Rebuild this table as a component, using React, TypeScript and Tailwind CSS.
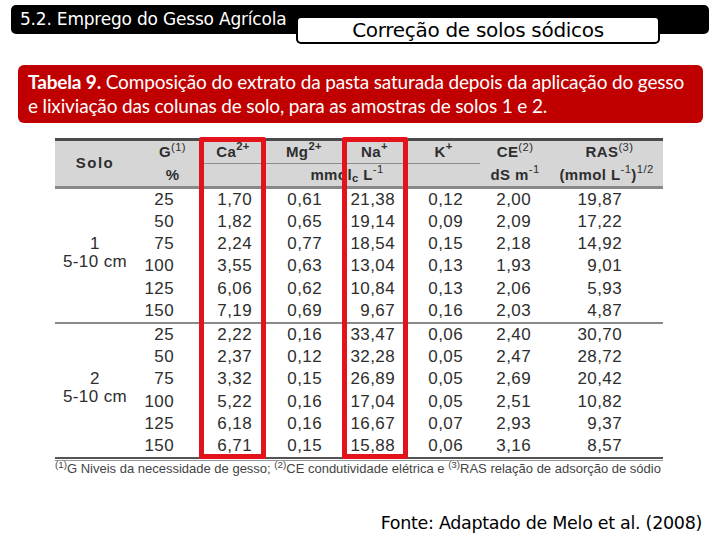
import React from "react";

const COLS = "grid grid-cols-[80px_65px_66px_76px_65px_73px_70px_113px]";
const PAD = ["pr-[26px]", "pr-[14px]", "pr-[20px]", "pr-[12px]", "pr-[17px]", "pr-[19px]", "pr-[41px]"];

const g1: string[][] = [
  ["25", "1,70", "0,61", "21,38", "0,12", "2,00", "19,87"],
  ["50", "1,82", "0,65", "19,14", "0,09", "2,09", "17,22"],
  ["75", "2,24", "0,77", "18,54", "0,15", "2,18", "14,92"],
  ["100", "3,55", "0,63", "13,04", "0,13", "1,93", "9,01"],
  ["125", "6,06", "0,62", "10,84", "0,13", "2,06", "5,93"],
  ["150", "7,19", "0,69", "9,67", "0,16", "2,03", "4,87"],
];
const g2: string[][] = [
  ["25", "2,22", "0,16", "33,47", "0,06", "2,40", "30,70"],
  ["50", "2,37", "0,12", "32,28", "0,05", "2,47", "28,72"],
  ["75", "3,32", "0,15", "26,89", "0,05", "2,69", "20,42"],
  ["100", "5,22", "0,16", "17,04", "0,05", "2,51", "10,82"],
  ["125", "6,18", "0,16", "16,67", "0,07", "2,93", "9,37"],
  ["150", "6,71", "0,15", "15,88", "0,06", "3,16", "8,57"],
];

function Group({ n, rows }: { n: string; rows: string[][] }) {
  return (
    <div className={`${COLS} grid-rows-[repeat(6,22.2px)]`}>
      <div className="row-span-6 col-start-1 row-start-1 flex flex-col items-center justify-center leading-[18px] pb-[6px]">
        <span>{n}</span>
        <span>5-10 cm</span>
      </div>
      {rows.map((r, i) =>
        r.map((v, j) => (
          <div
            key={`${i}-${j}`}
            className={`flex items-center justify-end pb-[1px] ${PAD[j]}`}
            style={{ gridRow: i + 1, gridColumn: j + 2 }}
          >
            {v}
          </div>
        ))
      )}
    </div>
  );
}

export default function App() {
  return (
    <div className="w-[720px] h-[540px] bg-white relative overflow-hidden flex flex-col">
      {/* Title bar */}
      <div className="mt-[5px] ml-[11px] w-[698px] h-[29px] bg-black rounded-[5px] relative flex items-center">
        <span className="pl-[9px] text-white text-[17px] font-['DejaVu_Sans',sans-serif] tracking-[-0.2px]">
          5.2. Emprego do Gesso Agrícola
        </span>
        <div className="absolute left-[285px] top-[11px] w-[364px] h-[28px] bg-white border-2 border-black rounded-[5px] flex items-center justify-center">
          <span className="text-black text-[20px] font-['DejaVu_Sans',sans-serif] tracking-[-0.3px]">
            Correção de solos sódicos
          </span>
        </div>
      </div>

      {/* Caption */}
      <div className="mt-[31px] ml-[18px] w-[685px] h-[58px] bg-[#c00000] rounded-[6px] px-[10px] pt-[5px] text-white text-[19px] leading-[24px] font-['Lato',sans-serif] tracking-[-0.15px]">
        <p>
          <b>Tabela 9.</b> Composição do extrato da pasta saturada depois da aplicação do gesso
        </p>
        <p>e lixiviação das colunas de solo, para as amostras de solos 1 e 2.</p>
      </div>

      {/* Table */}
      <div className="mt-[15px] ml-[55px] w-[608px] relative text-[#2e2e2e] text-[17px] font-['Liberation_Sans',Arial,sans-serif] tracking-[0.4px]">
        <div className="border-t-[3px] border-[#4a4a4a] bg-[#d6d6d6] border-b-[3px] border-b-[#888]">
          <div className={`${COLS} grid-rows-[23px_22px] font-bold text-[15px]`}>
            <div className="row-span-2 flex items-center justify-center tracking-[1.5px]">Solo</div>
            <div className="flex items-center justify-center pl-[10px]">
              G<sup className="font-normal">(1)</sup>
            </div>
            <div className="flex items-center justify-center border-b border-[#8c8c8c]">
              Ca<sup>2+</sup>
            </div>
            <div className="flex items-center justify-center border-b border-[#8c8c8c]">
              Mg<sup>2+</sup>
            </div>
            <div className="flex items-center justify-center border-b border-[#8c8c8c]">
              Na<sup>+</sup>
            </div>
            <div className="flex items-center justify-center border-b border-[#8c8c8c]">
              K<sup>+</sup>
            </div>
            <div className="flex items-center justify-center">
              CE<sup className="font-normal">(2)</sup>
            </div>
            <div className="flex items-center justify-center pl-[6px]">
              RAS<sup className="font-normal">(3)</sup>
            </div>
            <div className="flex items-center justify-center pl-[10px]">%</div>
            <div className="col-span-4 flex items-center justify-center pl-[14px]">
              mmol<sub>c</sub>&nbsp;L<sup className="font-normal">-1</sup>
            </div>
            <div className="flex items-center justify-center">
              dS&nbsp;m<sup className="font-normal">-1</sup>
            </div>
            <div className="flex items-center justify-center">
              (mmol&nbsp;L<sup className="font-normal">-1</sup>)<sup className="font-normal">1/2</sup>
            </div>
          </div>
        </div>
        <Group n="1" rows={g1} />
        <div className="h-[2px] bg-[#8a8a8a]" />
        <Group n="2" rows={g2} />
        <div className="h-[2px] bg-[#555]" />
        <div className="h-[1px] mt-[1px] bg-[#999]" />
        <p className="mt-[0px] leading-[15px] text-[13px] tracking-[0px] text-[#444] whitespace-nowrap">
          <sup>(1)</sup>G Niveis da necessidade de gesso; <sup>(2)</sup>CE condutividade elétrica e <sup>(3)</sup>RAS relação de adsorção de sódio
        </p>

        <div className="absolute left-[144px] top-[-1px] w-[67px] h-[322px] border-[5px] border-[#e3131b] rounded-[2px]" />
        <div className="absolute left-[287px] top-[-1px] w-[66px] h-[322px] border-[5px] border-[#e3131b] rounded-[2px]" />
      </div>

      {/* Source */}
      <div className="mt-auto mb-[4px] pr-[18px] text-right text-black text-[17.5px] font-['DejaVu_Sans',sans-serif] tracking-[-0.3px]">
        Fonte: Adaptado de Melo et al. (2008)
      </div>
    </div>
  );
}
